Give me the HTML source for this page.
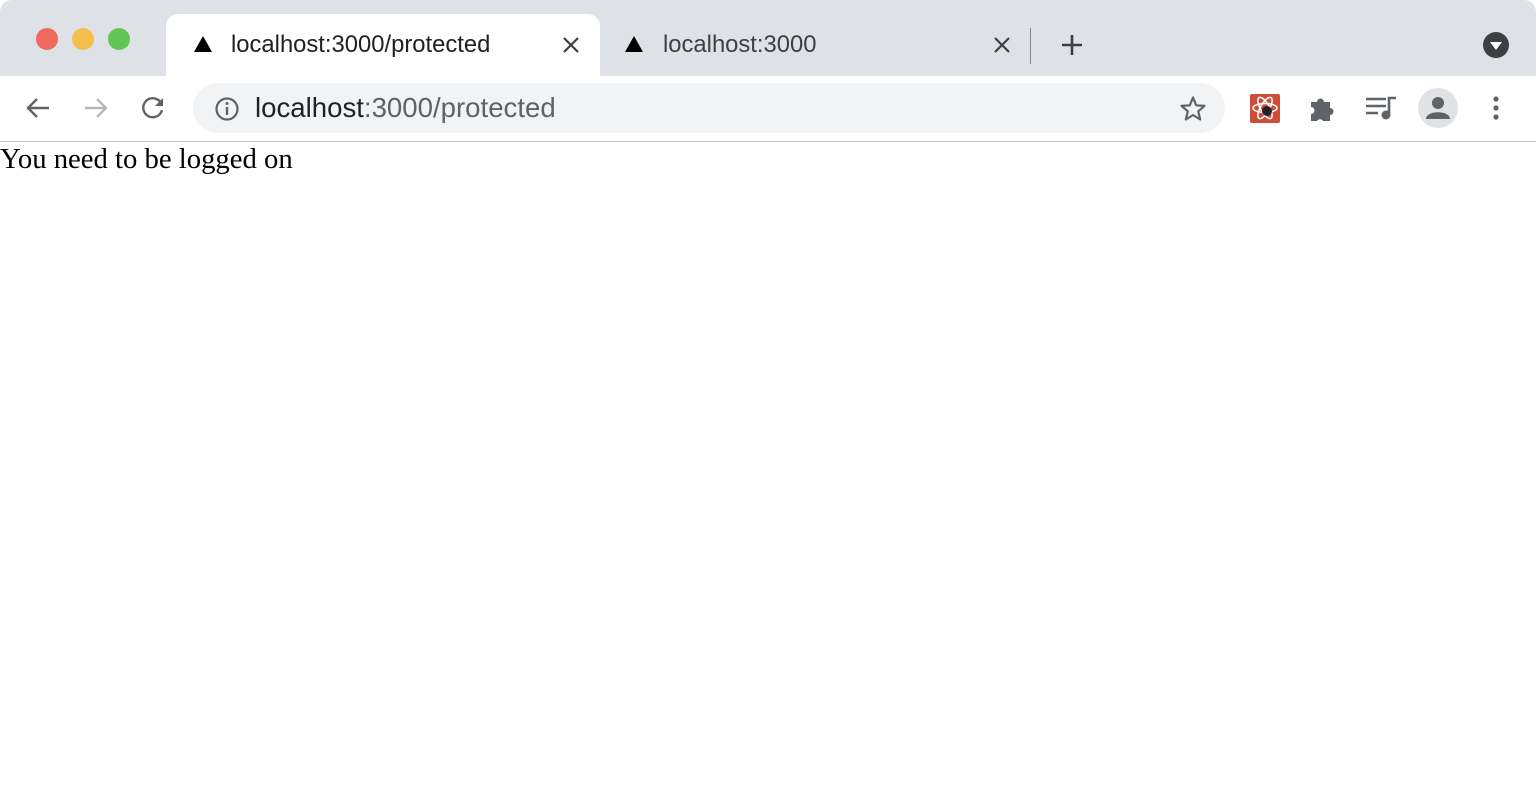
<!DOCTYPE html><html><head><style>
*{margin:0;padding:0;box-sizing:border-box}
body{width:1536px;height:808px;overflow:hidden;background:#fff;position:relative;font-family:"Liberation Sans",sans-serif}
.strip{position:absolute;left:0;top:0;width:1536px;height:76px;background:#dee1e6;border-radius:12px 12px 0 0}
.dot{position:absolute;top:28px;width:22px;height:22px;border-radius:50%}
.tab{position:absolute;top:14px;left:166px;width:434px;height:63px;background:#fff;border-radius:12px 12px 0 0}
.t{position:absolute;font-size:23.8px;color:#202124;line-height:28px}
.omni{position:absolute;left:193px;top:83px;width:1032px;height:50px;background:#f1f3f4;border-radius:25px}
.line{position:absolute;left:0;top:141px;width:1536px;height:1px;background:#c8c8c8}
.body{position:absolute;left:0;top:142px;font-family:"Liberation Serif",serif;font-size:28.7px;line-height:34px;color:#000}
</style></head><body>
<div class="strip"></div>
<div class="dot" style="left:36px;background:#ee6a5f"></div>
<div class="dot" style="left:72px;background:#f5be4f"></div>
<div class="dot" style="left:108px;background:#62c655"></div>
<div class="tab"></div>
<svg style="position:absolute;left:193px;top:35px" width="20" height="18"><path d="M10 1L19 17H1Z" fill="#000"/></svg>
<div class="t" style="left:231px;top:31px">localhost:3000/protected</div>
<svg style="position:absolute;left:562px;top:36px" width="18" height="18"><path d="M2 2L16 16M16 2L2 16" stroke="#3c4043" stroke-width="2.2"/></svg>
<svg style="position:absolute;left:624px;top:35px" width="20" height="18"><path d="M10 1L19 17H1Z" fill="#000"/></svg>
<div class="t" style="left:663px;top:31px;color:#3c4043">localhost:3000</div>
<svg style="position:absolute;left:993px;top:36px" width="18" height="18"><path d="M2 2L16 16M16 2L2 16" stroke="#3c4043" stroke-width="2.2"/></svg>
<div style="position:absolute;left:1030px;top:28px;width:1px;height:36px;background:#80868b"></div>
<svg style="position:absolute;left:1060px;top:33px" width="24" height="24"><path d="M12 2V22M2 12H22" stroke="#3c4043" stroke-width="2.6"/></svg>
<svg style="position:absolute;left:1483px;top:32px" width="26" height="26"><circle cx="13" cy="13" r="13" fill="#3c4043"/><path d="M7 10H19L13 18Z" fill="#fff"/></svg>
<svg style="position:absolute;left:24px;top:96px" width="28" height="24"><path d="M25 12H4M13 3L4 12L13 21" stroke="#5f6368" stroke-width="2.4" fill="none"/></svg>
<svg style="position:absolute;left:82px;top:96px" width="28" height="24"><path d="M3 12H24M15 3L24 12L15 21" stroke="#b5b8bc" stroke-width="2.4" fill="none"/></svg>
<svg style="position:absolute;left:140px;top:95px" width="26" height="26"><path d="M21 8A9.5 9.5 0 1 0 22 15" stroke="#5f6368" stroke-width="2.4" fill="none"/><path d="M23 3V11H15Z" fill="#5f6368"/></svg>
<div class="omni"></div>
<svg style="position:absolute;left:214px;top:96px" width="26" height="26"><circle cx="13" cy="13" r="10.5" stroke="#5f6368" stroke-width="2.2" fill="none"/><path d="M13 11V19" stroke="#5f6368" stroke-width="2.4"/><circle cx="13" cy="7.5" r="1.5" fill="#5f6368"/></svg>
<div class="t" style="left:255px;top:92px;font-size:27.6px;line-height:32px">localhost<span style="color:#5f6368">:3000/protected</span></div>
<svg style="position:absolute;left:1179px;top:95px" width="28" height="28"><path d="M14 2.5L17.2 10.3L25.5 10.9L19.2 16.3L21.2 24.5L14 20L6.8 24.5L8.8 16.3L2.5 10.9L10.8 10.3Z" stroke="#5f6368" stroke-width="2.2" fill="none" stroke-linejoin="round"/></svg>
<div style="position:absolute;left:1250px;top:94px;width:30px;height:29px;background:#cf4e3a;border-radius:2px"></div>
<svg style="position:absolute;left:1250px;top:94px" width="30" height="29"><ellipse cx="15" cy="14" rx="12" ry="4.5" stroke="#fff" stroke-width="1.5" fill="none"/><ellipse cx="15" cy="14" rx="12" ry="4.5" transform="rotate(60 15 14)" stroke="#fff" stroke-width="1.5" fill="none"/><ellipse cx="15" cy="14" rx="12" ry="4.5" transform="rotate(-60 15 14)" stroke="#fff" stroke-width="1.5" fill="none"/><circle cx="17" cy="17" r="5" fill="#222"/></svg>
<svg style="position:absolute;left:1309px;top:94px" width="28" height="28"><path d="M2 8H8A3.5 3.5 0 0 1 15 8H21V14A3.5 3.5 0 0 1 21 21V27H14A3.5 3.5 0 0 0 8 27H2V20A3.5 3.5 0 0 0 2 13Z" fill="#5f6368"/></svg>
<svg style="position:absolute;left:1365px;top:94px" width="32" height="28"><path d="M1 5H21M1 12H21M1 19H13" stroke="#5f6368" stroke-width="2.6"/><path d="M24 20V4H31" stroke="#5f6368" stroke-width="2.6" fill="none"/><circle cx="21" cy="21" r="4.5" fill="#5f6368"/></svg>
<svg style="position:absolute;left:1418px;top:88px" width="40" height="40"><circle cx="20" cy="20" r="20" fill="#e0e2e6"/><circle cx="20" cy="15" r="6" fill="#5f6368"/><path d="M8 31C8 22 32 22 32 31Z" fill="#5f6368"/></svg>
<svg style="position:absolute;left:1490px;top:94px" width="12" height="28"><circle cx="6" cy="5" r="2.6" fill="#5f6368"/><circle cx="6" cy="14" r="2.6" fill="#5f6368"/><circle cx="6" cy="23" r="2.6" fill="#5f6368"/></svg>
<div class="line"></div>
<div class="body">You need to be logged on</div>
</body></html>
